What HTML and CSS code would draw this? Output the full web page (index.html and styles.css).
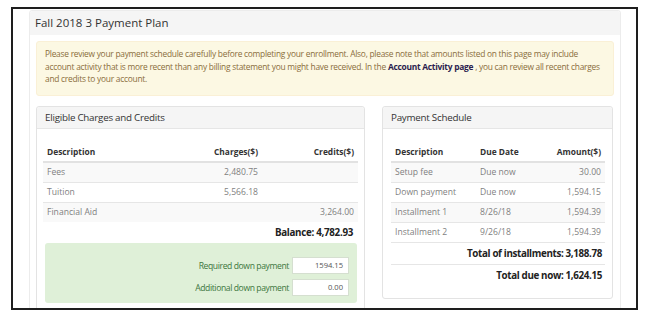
FILE: index.html
```html
<!DOCTYPE html>
<html>
<head>
<meta charset="utf-8">
<link rel="stylesheet" href="styles.css">
</head>
<body>
<div class="frame">
  <div class="panel outer">
    <div class="heading title">Fall 2018 3 Payment Plan</div>
    <div class="outer-body">
      <div class="alert">Please review your payment schedule carefully before completing your enrollment. Also, please note that amounts listed on this page may include account activity that is more recent than any billing statement you might have received. In the <a class="link">Account Activity page</a> , you can review all recent charges and credits to your account.</div>
      <div class="cols">
        <div class="panel charges">
          <div class="heading">Eligible Charges and Credits</div>
          <div class="body charges-body">
            <table class="tbl">
              <colgroup><col class="c-desc"><col class="c-chg"><col class="c-cred"></colgroup>
              <thead>
                <tr><th>Description</th><th class="r">Charges($)</th><th class="r">Credits($)</th></tr>
              </thead>
              <tbody>
                <tr class="odd"><td>Fees</td><td class="r">2,480.75</td><td class="r"></td></tr>
                <tr><td>Tuition</td><td class="r">5,566.18</td><td class="r"></td></tr>
                <tr class="odd"><td>Financial Aid</td><td class="r"></td><td class="r">3,264.00</td></tr>
              </tbody>
            </table>
            <div class="balance">Balance: 4,782.93</div>
            <div class="well">
              <div class="field"><span class="lbl">Required down payment</span><span class="inp">1594.15</span></div>
              <div class="field"><span class="lbl">Additional down payment</span><span class="inp">0.00</span></div>
            </div>
          </div>
        </div>
        <div class="panel schedule">
          <div class="heading">Payment Schedule</div>
          <div class="body schedule-body">
            <table class="tbl">
              <colgroup><col class="s-desc"><col class="s-date"><col class="s-amt"></colgroup>
              <thead>
                <tr><th>Description</th><th>Due Date</th><th class="r">Amount($)</th></tr>
              </thead>
              <tbody>
                <tr class="odd"><td>Setup fee</td><td>Due now</td><td class="r">30.00</td></tr>
                <tr><td>Down payment</td><td>Due now</td><td class="r">1,594.15</td></tr>
                <tr class="odd"><td>Installment 1</td><td>8/26/18</td><td class="r">1,594.39</td></tr>
                <tr class="last"><td>Installment 2</td><td>9/26/18</td><td class="r">1,594.39</td></tr>
              </tbody>
            </table>
            <div class="total first-total">Total of installments: 3,188.78</div>
            <div class="total">Total due now: 1,624.15</div>
          </div>
        </div>
      </div>
    </div>
  </div>
</div>
</body>
</html>
```
FILE: styles.css
```css
* { box-sizing: border-box; }
body {
  margin: 0;
  background: #fff;
  font-family: "Open Sans", "Noto Sans", sans-serif;
  color: #333;
}
.frame {
  margin: 7px 0 0 11px;
  width: 627px;
  height: 303px;
  border: 2px solid #1e1e1e;
  padding: 1px 15px 0 16px;
  overflow: hidden;
}
.panel {
  background: #fff;
  border: 1px solid #e3e3e3;
  border-radius: 3px;
}
.outer {
  border-color: #ececec;
}
.heading {
  background: #f5f5f5;
  border-bottom: 1px solid #e6e6e6;
  height: 22px;
  padding: 0 8px;
  font-size: 9.8px;
  letter-spacing: -0.25px;
  line-height: 21px;
  color: #333;
  border-radius: 3px 3px 0 0;
}
.title {
  height: 24px;
  line-height: 23px;
  padding: 0 5px;
  font-size: 11.5px;
  letter-spacing: 0;
  border-bottom: none;
}
.outer-body {
  padding: 6px 6px 0 6px;
}
.alert {
  background: #fcf8e3;
  border: 1px solid #faf0d6;
  border-radius: 3px;
  color: #8a6d3b;
  font-size: 8.4px;
  letter-spacing: -0.25px;
  line-height: 12.5px;
  padding: 6px 12px 8px 8px;
  height: 55px;
}
.link {
  color: #2b1d4e;
  font-weight: bold;
}
.cols {
  display: flex;
  gap: 17px;
  margin-top: 10px;
  align-items: flex-start;
}
.charges { width: 329px; height: 230px; }
.schedule { width: 231px; }
.charges-body { padding: 12px 6px 0 6px; }
.schedule-body { padding: 12px 7px 11px 8px; }
.tbl {
  width: 100%;
  border-collapse: collapse;
  table-layout: fixed;
  font-size: 8.6px;
}
.c-desc { width: 131px; }
.c-chg { width: 88px; }
.s-desc { width: 85px; }
.s-date { width: 60px; }
.tbl th {
  font-weight: bold;
  color: #333;
  text-align: left;
  height: 21px;
  padding: 0 4px;
  border-bottom: 2px solid #e2e2e2;
  font-size: 8.4px;
}
.tbl td {
  color: #7f7f7f;
  height: 20px;
  padding: 0 4px;
  border-top: 1px solid #e6e6e6;
}
.tbl tr.last td { border-bottom: 1px solid #e6e6e6; }
.tbl tr.odd td { background: #f9f9f9; }
.tbl .r { text-align: right; }
.balance {
  text-align: right;
  font-weight: bold;
  font-size: 9.8px;
  letter-spacing: -0.3px;
  height: 21px;
  line-height: 21px;
  padding-right: 5px;
  color: #222;
}
.well {
  background: #dff0d8;
  border-radius: 3px;
  margin: 0 1px 0 2px;
  padding: 14px 8px 7px 0;
  display: flex;
  flex-direction: column;
  gap: 5px;
}
.field {
  display: flex;
  justify-content: flex-end;
  align-items: center;
  gap: 3px;
}
.lbl {
  color: #3c763d;
  font-size: 8.6px;
  letter-spacing: -0.4px;
}
.inp {
  width: 57px;
  height: 17px;
  background: #fff;
  border: 1px solid #d5dfd0;
  font-size: 7.6px;
  color: #555;
  text-align: right;
  line-height: 15px;
  padding-right: 5px;
}
.total {
  text-align: right;
  font-weight: bold;
  font-size: 9.8px;
  letter-spacing: -0.35px;
  height: 22px;
  line-height: 21px;
  padding-right: 3px;
  color: #222;
}
.first-total {
  border-bottom: 1px solid #e6e6e6;
}
```
